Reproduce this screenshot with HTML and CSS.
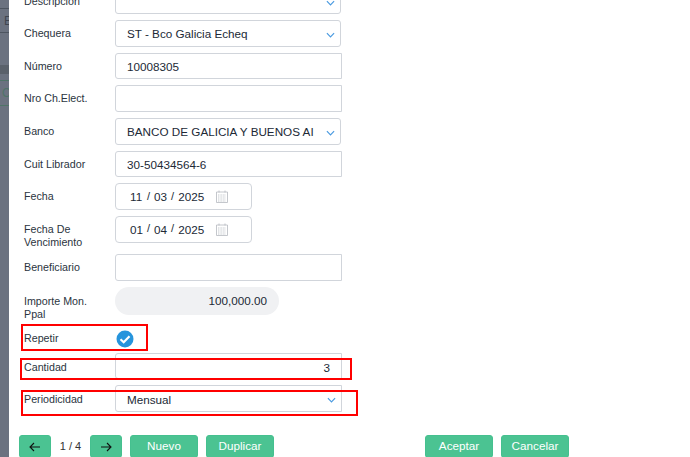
FILE: index.html
```html
<!DOCTYPE html>
<html lang="es">
<head>
<meta charset="utf-8">
<title>Cheque</title>
<link rel="stylesheet" href="styles.css">
</head>
<body>
<div class="page">
  <aside class="backdrop">
    <div class="bd-row bd-e">E</div>
    <div class="bd-band"></div>
    <div class="bd-row bd-c">C</div>
  </aside>
  <main class="modal">
    <form class="form">
      <div class="row h-desc"><label class="lbl">Descripción</label>
        <div class="ctl select"><span></span><svg class="chev" viewBox="0 0 10 6"><path d="M1 1l4 4 4-4"/></svg></div></div>
      <div class="row"><label class="lbl">Chequera</label>
        <div class="ctl select"><span>ST - Bco Galicia Echeq</span><svg class="chev" viewBox="0 0 10 6"><path d="M1 1l4 4 4-4"/></svg></div></div>
      <div class="row"><label class="lbl">Número</label><div class="ctl input"><span>10008305</span></div></div>
      <div class="row"><label class="lbl">Nro Ch.Elect.</label><div class="ctl input"></div></div>
      <div class="row"><label class="lbl">Banco</label>
        <div class="ctl select"><span>BANCO DE GALICIA Y BUENOS AI</span><svg class="chev" viewBox="0 0 10 6"><path d="M1 1l4 4 4-4"/></svg></div></div>
      <div class="row"><label class="lbl">Cuit Librador</label><div class="ctl input"><span>30-50434564-6</span></div></div>
      <div class="row"><label class="lbl">Fecha</label>
        <div class="ctl date"><span class="dd">11</span><i>/</i><span class="mm">03</span><i>/</i><span>2025</span>
          <svg class="cal" viewBox="0 0 12 13"><path class="cal-o" d="M.5 2h11v10.500h-11zM3 .5v2M9 .5v2"/><path class="cal-g" d="M2 5h8M2 7h8M2 9h8M2 11h8"/></svg></div></div>
      <div class="row tall"><label class="lbl">Fecha De Vencimiento</label>
        <div class="ctl date"><span class="dd">01</span><i>/</i><span class="mm">04</span><i>/</i><span>2025</span>
          <svg class="cal" viewBox="0 0 12 13"><path class="cal-o" d="M.5 2h11v10.500h-11zM3 .5v2M9 .5v2"/><path class="cal-g" d="M2 5h8M2 7h8M2 9h8M2 11h8"/></svg></div></div>
      <div class="row"><label class="lbl">Beneficiario</label><div class="ctl input"></div></div>
      <div class="row h28"><label class="lbl lbl-two">Importe Mon. Ppal</label><div class="ctl amount"><span>100,000.00</span></div></div>
      <div class="row h-rep"><label class="lbl">Repetir</label>
        <svg class="check" viewBox="0 0 18 18"><circle cx="9" cy="9" r="8.500"/><path d="M4.500 9.200l3.200 3 5.800-6"/></svg></div>
      <div class="row"><label class="lbl lbl-low">Cantidad</label><div class="ctl input right"><span>3</span></div></div>
      <div class="row"><label class="lbl lbl-low">Periodicidad</label>
        <div class="ctl select wide"><span>Mensual</span><svg class="chev" viewBox="0 0 10 6"><path d="M1 1l4 4 4-4"/></svg></div></div>
    </form>
    <div class="toolbar">
      <button class="btn arrow" type="button"><svg viewBox="0 0 12 10"><path d="M11 5H1M5 1L1 5l4 4"/></svg></button>
      <span class="pager">1 / 4</span>
      <button class="btn arrow" type="button"><svg viewBox="0 0 12 10"><path d="M1 5h10M7 1l4 4-4 4"/></svg></button>
      <button class="btn b68 first" type="button">Nuevo</button>
      <button class="btn b68 second" type="button">Duplicar</button>
      <button class="btn b68 accept" type="button">Aceptar</button>
      <button class="btn b68 second" type="button">Cancelar</button>
    </div>
    <div class="mark m1"></div>
    <div class="mark m2"></div>
    <div class="mark m3"></div>
  </main>
</div>
</body>
</html>
```
FILE: styles.css
```css
* { box-sizing: border-box; }
html, body { margin: 0; height: 100%; overflow: hidden; background: #fff; }
body { font-family: "Liberation Sans", Arial, sans-serif; color: #212936; }
.page { display: flex; width: 690px; height: 457px; overflow: hidden; }

.backdrop { width: 9px; flex: none; background: #6b7280; color: #3f4650; font-size: 12px; overflow: hidden; }
.bd-row { height: 25px; line-height: 24px; padding-left: 4px; border-bottom: 1px solid #4d5560; }
.bd-e { margin-top: 8px; height: 25px; border-top: 1px solid #4d5560; }
.bd-band { height: 9px; margin-top: 32px; background: #5a616b; }
.bd-c { height: 26px; margin-top: 6px; padding-left: 2px; border-top: 1px solid #4f7468; border-bottom: 1px solid #4f7468; color: #4f7468; }

.modal { position: relative; flex: 1; background: #fff; }
.form { display: flex; flex-direction: column; gap: 6.170px; padding-left: 15px; margin-top: -12px; height: 447px; }

.row { display: flex; align-items: flex-start; flex: none; height: 26.500px; }
.h-desc { height: 26px; }
.h28 { height: 28px; }
.h-rep { height: 25.660px; padding-top: 8.800px; }
.tall { margin-bottom: 5.330px; }

.lbl { width: 92px; flex: none; font-size: 10.700px; line-height: 12.800px; padding-top: 7px; padding-right: 10px; margin-right: -1px; color: #2b3440; }
.lbl-two { padding-top: 8px; }
.lbl-low { padding-top: 8px; }
.h-rep .lbl { padding-top: 2px; }

.ctl { height: 100%; display: flex; align-items: center; font-size: 11.700px; background: #fff; border: 1px solid #d1d5db; }
.ctl span { white-space: nowrap; }
.select { position: relative; width: 226px; border-radius: 3px; padding-left: 11px; }
.input { width: 227px; border-radius: 3px 0 0 3px; padding-left: 11px; }
.input.right { justify-content: flex-end; padding: 3px 11px 0 0; }
.select.wide { width: 227px; border-radius: 3px 0 0 3px; padding-top: 2px; }
.chev { position: absolute; right: 5px; top: 11px; width: 9px; height: 6px; fill: none; stroke: #4a9ae0; stroke-width: 1.300; }

.date { width: 137px; padding-left: 14px; border-radius: 4px; }
.date i { font-style: normal; padding: 0 4px 2px 2px; font-size: 11px; }
.date .dd, .date .mm { width: 15px; }
.cal { width: 12px; height: 13px; margin-left: 12px; fill: none; }
.cal-o { stroke: #b5b9bf; stroke-width: .8; }
.cal-g { stroke: #c4c8cd; stroke-width: 1; stroke-dasharray: 1 .6; }

.amount { width: 164px; background: #f0f1f3; border: 0; border-radius: 14px; justify-content: flex-end; padding-right: 12px; }

.check { width: 18px; height: 18px; margin-left: 1px; }
.check circle { fill: #2694dc; }
.check path { fill: none; stroke: #fff; stroke-width: 2.200; }

.toolbar { display: flex; align-items: flex-start; padding-left: 10px; height: 22px; }
.btn { height: 23px; border: 1px solid #45c08f; border-radius: 3px; background: #4bc392; color: #fff; font: 11.700px "Liberation Sans", Arial, sans-serif; padding: 0 0 3px; display: flex; align-items: center; justify-content: center; }
.arrow { width: 32px; padding: 1px 0 0; }
.arrow svg { width: 12px; height: 10px; fill: none; stroke: #111; stroke-width: 1.100; }
.pager { width: 39px; text-align: center; font-size: 11px; line-height: 23px; color: #333; }
.b68 { width: 68px; }
.first { margin-left: 8px; }
.second { margin-left: 8px; }
.accept { margin-left: 151px; }

.mark { position: absolute; border: 2px solid #f00; pointer-events: none; }
.m1 { left: 12px; top: 324px; width: 127px; height: 27px; }
.m2 { left: 11px; top: 357.500px; width: 332px; height: 22px; }
.m3 { left: 11.500px; top: 390px; width: 337px; height: 26px; }
```
